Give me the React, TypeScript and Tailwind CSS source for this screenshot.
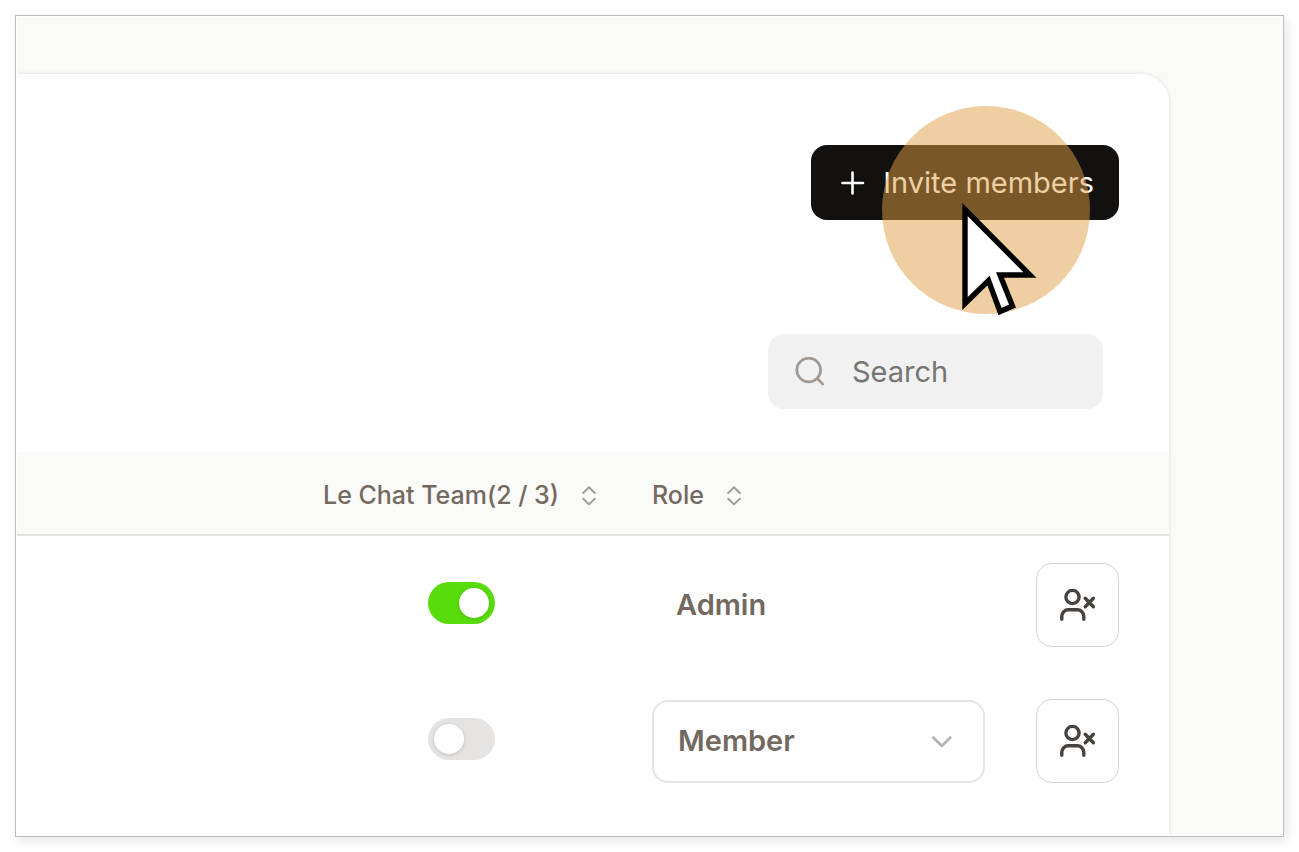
import { useState } from "react";

type Role = "Admin" | "Member";

type Member = {
  id: string;
  role: Role;
  hasSeat: boolean;
};

const initialMembers: Member[] = [
  { id: "first", role: "Admin", hasSeat: true },
  { id: "second", role: "Member", hasSeat: false },
];

function SortIcon() {
  return (
    <svg
      width="16"
      height="20"
      viewBox="0 0 16 20"
      fill="none"
      stroke="currentColor"
      strokeWidth="2"
      strokeLinecap="round"
      strokeLinejoin="round"
      aria-hidden="true"
    >
      <path d="M2.2 7 8 1.3 13.8 7M2.2 12.7 8 18.4l5.8-5.7" />
    </svg>
  );
}

function RemoveUserIcon() {
  return (
    <svg
      width="36"
      height="34"
      viewBox="0 0 36 34"
      fill="none"
      stroke="currentColor"
      strokeWidth="3.4"
      strokeLinecap="round"
      strokeLinejoin="round"
      aria-hidden="true"
    >
      <circle cx="12.5" cy="9" r="6.6" />
      <path d="M1.8 31.3v-3a6.5 6.5 0 0 1 6.5-6.5h9a6.5 6.5 0 0 1 6.5 6.5v3" />
      <path d="m25.2 10.3 8.2 8.4M33.4 10.3l-8.2 8.4" />
    </svg>
  );
}

function ClickHighlight() {
  return (
    <div className="pointer-events-none absolute -top-[39px] right-[29px] size-52">
      <div className="size-full rounded-full bg-[#df9e43]/50" />
      <svg
        className="absolute left-[76px] top-[92px]"
        width="84"
        height="120"
        viewBox="0 0 84 120"
        fill="#fff"
        stroke="#000"
        strokeWidth="5.4"
        strokeMiterlimit="10"
        aria-hidden="true"
      >
        <path d="M7 11.5v94l23.5-23 11.5 31 12.5-5.5-12.5-31h30z" />
      </svg>
    </div>
  );
}

function SortableHeader({ label, className }: { label: string; className: string }) {
  return (
    <th scope="col" className={`px-[26px] pt-1.5 text-left font-medium ${className}`}>
      <button type="button" className="flex items-center gap-[22px] whitespace-nowrap">
        {label}
        <span className="text-[#a39d98]">
          <SortIcon />
        </span>
      </button>
    </th>
  );
}

export default function App() {
  const [members, setMembers] = useState(initialMembers);
  const [query, setQuery] = useState("");

  function update(id: string, changes: Partial<Member>) {
    setMembers((prev) =>
      prev.map((m) => (m.id === id ? { ...m, ...changes } : m))
    );
  }

  return (
    <div className="h-screen bg-white p-[15px] font-['Inter',sans-serif] text-[#736961]">
      <div className="h-full border border-[#bdbdbd] bg-white p-px shadow-[3px_4px_10px_rgba(0,0,0,0.1)]">
        <main className="flex h-full overflow-hidden bg-[#fafaf8] pr-[113px] pt-[57px]">
          <section className="min-w-0 flex-1 rounded-tr-[28px] bg-white shadow-[0_0_4px_rgba(0,0,0,0.12)]">
            <div className="flex flex-col items-end pr-[50px] pt-[71px]">
              <div className="relative">
                <button
                  type="button"
                  className="flex h-[75px] items-center gap-[18px] rounded-2xl bg-[#12110f] pl-[30px] pr-[25px] text-[29px] text-white"
                >
                  <svg
                    width="24"
                    height="24"
                    viewBox="0 0 24 24"
                    fill="none"
                    stroke="currentColor"
                    strokeWidth="2.6"
                    strokeLinecap="round"
                    aria-hidden="true"
                  >
                    <path d="M11.5 1.5v21M1.5 12h20.5" />
                  </svg>
                  Invite members
                </button>
                <ClickHighlight />
              </div>

              <label className="mr-4 mt-[114px] flex h-[75px] w-[335px] items-center gap-[27px] rounded-2xl bg-[#f1f1f1] px-[27px]">
                <svg
                  className="shrink-0 text-[#a19992]"
                  width="30"
                  height="30"
                  viewBox="0 0 30 30"
                  fill="none"
                  stroke="currentColor"
                  strokeWidth="2.7"
                  strokeLinecap="round"
                  aria-hidden="true"
                >
                  <circle cx="13.7" cy="13" r="11.9" />
                  <path d="m22.2 21.5 5.6 5.6" />
                </svg>
                <input
                  type="text"
                  aria-label="Search"
                  placeholder="Search"
                  value={query}
                  onChange={(e) => setQuery(e.target.value)}
                  className="w-full min-w-0 bg-transparent text-[29px] placeholder:text-[#777573] focus:outline-none"
                />
              </label>
            </div>

            <table className="mt-[43px] w-full table-fixed border-separate border-spacing-0">
              <thead className="bg-[#fafaf8] text-[25px]">
                <tr className="h-[84px] *:border-b-2 *:border-[#e3e2e0]">
                  <td />
                  <SortableHeader label="Le Chat Team(2 / 3)" className="w-[329px]" />
                  <SortableHeader label="Role" className="w-[385px]" />
                  <td className="w-[158px]" />
                </tr>
              </thead>
              <tbody className="text-[29px] font-semibold">
                {members.map((member) => (
                  <tr key={member.id} className="h-[136px] *:pt-0.5">
                    <td />
                    <td className="px-[26px]">
                      <input
                        type="checkbox"
                        role="switch"
                        aria-label="Le Chat Team"
                        checked={member.hasSeat}
                        onChange={(e) =>
                          update(member.id, { hasSeat: e.target.checked })
                        }
                        className="mx-auto mb-1 block h-[42px] w-[67px] appearance-none rounded-full bg-[#e5e4e2] p-1.5 before:block before:size-[30px] before:rounded-full before:bg-white before:shadow-[0_1px_4px_rgba(0,0,0,0.15)] checked:bg-[#59dc0c] checked:before:ml-[25px]"
                      />
                    </td>
                    <td className="px-[26px]">
                      {member.role === "Admin" ? (
                        <span className="block pl-6">Admin</span>
                      ) : (
                        <div className="relative">
                          <select
                            aria-label="Role"
                            value={member.role}
                            onChange={(e) =>
                              update(member.id, { role: e.target.value as Role })
                            }
                            className="block h-[83px] w-full appearance-none rounded-2xl border-2 border-[#e6e5e5] bg-white px-6"
                          >
                            <option>Member</option>
                            <option>Admin</option>
                          </select>
                          <svg
                            className="pointer-events-none absolute right-8 top-9 text-[#b5b2af]"
                            width="22"
                            height="12"
                            viewBox="0 0 22 12"
                            fill="none"
                            stroke="currentColor"
                            strokeWidth="2.7"
                            strokeLinecap="round"
                            strokeLinejoin="round"
                            aria-hidden="true"
                          >
                            <path d="m2.3 1.5 8.5 8.5 8.5-8.5" />
                          </svg>
                        </div>
                      )}
                    </td>
                    <td className="pl-[25px] pr-[50px]">
                      <button
                        type="button"
                        aria-label="Remove member"
                        className="flex h-[84px] w-full items-center justify-center rounded-2xl border border-[#d6d5d4] bg-white text-[#48423c]"
                      >
                        <RemoveUserIcon />
                      </button>
                    </td>
                  </tr>
                ))}
              </tbody>
            </table>
          </section>
        </main>
      </div>
    </div>
  );
}
